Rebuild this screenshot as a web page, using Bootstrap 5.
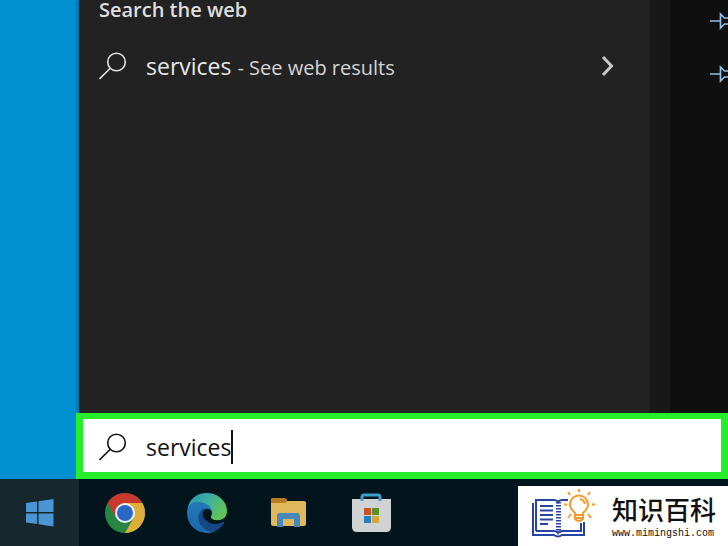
<!DOCTYPE html>
<html lang="en">
<head>
<meta charset="utf-8">
<meta name="viewport" content="width=device-width, initial-scale=1">
<title>Search</title>
<link href="https://cdn.jsdelivr.net/npm/bootstrap@5.3.0/dist/css/bootstrap.min.css" rel="stylesheet">
<style>
body { font-family: "Open Sans", "Noto Sans", sans-serif; background: #0090d2; color: #dedede; }
.start-panel { margin-left: 79px; min-height: 0; background: #222; box-shadow: -1px 0 4px #055a86; }
.web-title { font-size: 20px; line-height: 20px; font-weight: 600; padding: 0 20px; }
.result-row { height: 48px; margin-top: 22px; padding: 0 33px 0 20px; color: #e6e6e6; font-size: 23px; }
.result-note { font-size: 20px; color: #d4d4d4; }
.glass { width: 28px; height: 28px; flex: none; margin-right: 19px; }
.strip { width: 20px; background: #181818; }
.pins { width: 58px; background: #0f0f0f; padding: 8px 0 0 40px; gap: 25px; }
.pin-btn svg { width: 28px; height: 28px; }
.search-box { margin-left: 76px; height: 66px; border: 7px solid #27ee2b; border-top-width: 6px; background: #fff; color: #111; padding: 2px 0 0 16px; }
.search-input { font-size: 23px; line-height: 34px; color: #111; outline: 0; }
.caret { left: 85px; top: 0; width: 2px; height: 34px; background: #111; }
.taskbar { height: 67px; background: #02141c; }
.start-btn { width: 79px; margin-right: 5px; background: #17272e; }
.task-btn { width: 82px; }
.task-btn svg { width: 42px; height: 42px; }
.brand { width: 210px; height: 60px; background: #fff; color: #111; padding-left: 12px; gap: 14px; }
.brand-name { font: 500 26px/38px "Noto Sans CJK SC", sans-serif; }
.brand-url { font: 10px/12px "Liberation Mono", monospace; }
.brand-text { padding-bottom: 2px; }
</style>
<script src="https://cdn.jsdelivr.net/npm/bootstrap@5.3.0/dist/js/bootstrap.bundle.min.js"></script>
</head>
<body class="vh-100 d-flex flex-column overflow-hidden">
<main class="start-panel flex-grow-1 d-flex">
  <section class="flex-grow-1">
    <h1 class="web-title mb-0">Search the web</h1>
    <a href="#" class="result-row d-flex align-items-center text-decoration-none">
      <svg class="glass" viewBox="0 0 28 28" fill="none" stroke="#e2e2e2" stroke-width="1.6"><circle cx="17.500" cy="10" r="8.800"/><path d="M11.500 16 .5 27"/></svg>
      <span>services <span class="result-note">- See web results</span></span>
      <svg class="ms-auto" width="18" height="22" viewBox="0 0 18 22" fill="none" stroke="#c9c9c9" stroke-width="3"><path d="m4 2 8.500 9L4 20"/></svg>
    </a>
  </section>
  <div class="strip flex-shrink-0"></div>
  <aside class="pins flex-shrink-0 d-flex flex-column align-items-start overflow-hidden">
    <button class="pin-btn btn p-0 border-0 d-flex" aria-label="Pin first result"><svg viewBox="0 0 28 28" fill="none" stroke="#92bfdf" stroke-width="1.700"><path d="M0 13h10M10.500 6v14l4-4h9v-6h-9z"/></svg></button>
    <button class="pin-btn btn p-0 border-0 d-flex" aria-label="Pin second result"><svg viewBox="0 0 28 28" fill="none" stroke="#92bfdf" stroke-width="1.700"><path d="M0 13h10M10.500 6v14l4-4h9v-6h-9z"/></svg></button>
  </aside>
</main>
<form class="search-box position-relative flex-shrink-0 d-flex align-items-center">
  <svg class="glass" viewBox="0 0 28 28" fill="none" stroke="#111" stroke-width="1.600"><circle cx="17.500" cy="10" r="8.800"/><path d="M11.500 16 .5 27"/></svg>
  <div class="position-relative flex-grow-1">
    <input id="q" class="search-input d-block w-100 border-0 p-0 bg-transparent" type="text" value="services" aria-label="Search">
    <span class="caret position-absolute"></span>
  </div>
</form>
<nav class="taskbar flex-shrink-0 d-flex align-items-stretch" aria-label="Taskbar">
  <button class="start-btn btn rounded-0 border-0 p-0 flex-shrink-0" aria-label="Start">
    <svg width="28" height="28" viewBox="0 0 28 28" fill="#4b96d2"><path d="M0 4 11 2.500V13H0zM12.500 2.300 27.500 0v13h-15zM0 14.400h11V25L0 23.500zM12.500 14.400h15V27.500l-15-2.200z"/></svg>
  </button>
  <button class="task-btn btn border-0 p-0" aria-label="Chrome">
    <svg viewBox="0 0 42 42"><circle cx="21" cy="21" r="20" fill="#278641"/><path d="M21 21 3.680 11A20 20 0 0 1 38.300 11z" fill="#cb382e"/><path d="M3.700 11 12.300 26 21 21 21 11z" fill="#cb382e"/><path d="M21 11H38.300A20 20 0 0 1 21 41L29.700 26z" fill="#dfae38"/><circle cx="21" cy="21" r="10" fill="#f2f4f6"/><circle cx="21" cy="21" r="8" fill="#2b67c6"/></svg>
  </button>
  <button class="task-btn btn border-0 p-0" aria-label="Edge">
    <svg viewBox="0 0 42 42"><defs><linearGradient id="eg" x1="0" y1="0" x2="1" y2=".5"><stop offset="0" stop-color="#2592b8"/><stop offset=".5" stop-color="#3aaea0"/><stop offset="1" stop-color="#60c458"/></linearGradient><linearGradient id="eb" x1="0" y1="0" x2="0" y2="1"><stop offset="0" stop-color="#2377b8"/><stop offset="1" stop-color="#1c69ad"/></linearGradient></defs>
    <path d="M1.500 17C3 7 11 1 20.500 1 32 1 41 9 41 19c0 6-4 9.500-9.500 9.500-4 0-7-1.500-7-3.500 0-1 1.500-2 1.500-4 0-3-3-6-7-6C10 12 3 14 1.500 17z" fill="url(#eg)"/>
    <path d="M1 20c0-6 5-10 11-10 8 0 14 5 14 10-2-3-5-4-8-3-4 3-4 10 0 14 3 5 8 8 11 8-2 1.500-4 2-7 2C9 41 1 32 1 20z" fill="url(#eb)"/>
    <path d="M17 17c-5 3-6 9-3 15 3 5 8 8 13 8 5-2 9-5 11-9 .5-1-.5-1.500-1.500-1-2 1-4 1.500-6.500 1.500-8 0-12-7-9-14.500z" fill="#154983"/>
    <path d="M25.500 20c-1-3-4-4-7-2-3 3-2 7 1 10 4 4 10 5 17 2l1.500-3.500c-4 2.500-9 2.500-12 .5-2-1.500-.5-3-.5-7z" fill="#02141c"/></svg>
  </button>
  <button class="task-btn btn border-0 p-0" aria-label="File Explorer">
    <svg viewBox="0 0 42 42"><path d="M3 8q0-2 2-2h11l3 3h17q2 0 2 2v21q0 2-2 2H5q-2 0-2-2z" fill="#e1b75b"/><path d="M3 11V8q0-2 2-2h11q3 0 3 2.500T16 11z" fill="#b77c20"/><path d="M9 35V24q0-3 3-3h17q3 0 3 3v11h-6v-8H15v8z" fill="#4688b8"/></svg>
  </button>
  <button class="task-btn btn border-0 p-0" aria-label="Microsoft Store">
    <svg viewBox="0 0 42 42"><path d="M2 7h39v28q0 5-5 5H7q-5 0-5-5z" fill="#d1d2d4"/><path d="M12 9V5q0-2 2-2h14q2 0 2 2v4" fill="none" stroke="#3b9fc9" stroke-width="3"/><path d="M14 16h7v7h-7z" fill="#c94f27"/><path d="M22 16h7v7h-7z" fill="#559329"/><path d="M14 24h7v7h-7z" fill="#277ebc"/><path d="M22 24h7v7h-7z" fill="#d9a536"/></svg>
  </button>
  <a href="#" class="brand ms-auto align-self-end flex-shrink-0 d-flex align-items-center text-decoration-none">
    <svg width="68" height="56" viewBox="0 0 68 56" fill="none" stroke="#2643a5" stroke-width="2"><path d="M3 15v32h21q4 3 8 0h22V34M6 43V12h18q3 0 4 2 1-2 4-2h6M6 43h18q3 0 4 2 1-2 4-2h19v-8"/><path d="M10 18h13M10 22.500h13M10 27h13M10 31.500h13M10 36h8"/><path d="M28.500 14v31" stroke-width="5" stroke-dasharray="1.500 1.500"/>
    <g stroke="#f59a2d" stroke-width="2"><path fill="#fff" d="M45 27v-2c-2-2-5-4-5-8.500a9 9 0 0 1 18 0c0 4.500-3 6.500-5 8.500v2zM45 27v4q4 4 8 0v-4M45 30h8"/><path d="M50 11q4 1 5 5M49 1v3M38 4l2 3M60 4l-2 3M34 16.500h3M62 16.500h3M38 30l3-4M61 30l-3-4"/></g></svg>
    <span class="brand-text d-flex flex-column align-items-start"><span class="brand-name" lang="zh">知识百科</span><span class="brand-url">www.mimingshi.com</span></span>
  </a>
</nav>
</body>
</html>
